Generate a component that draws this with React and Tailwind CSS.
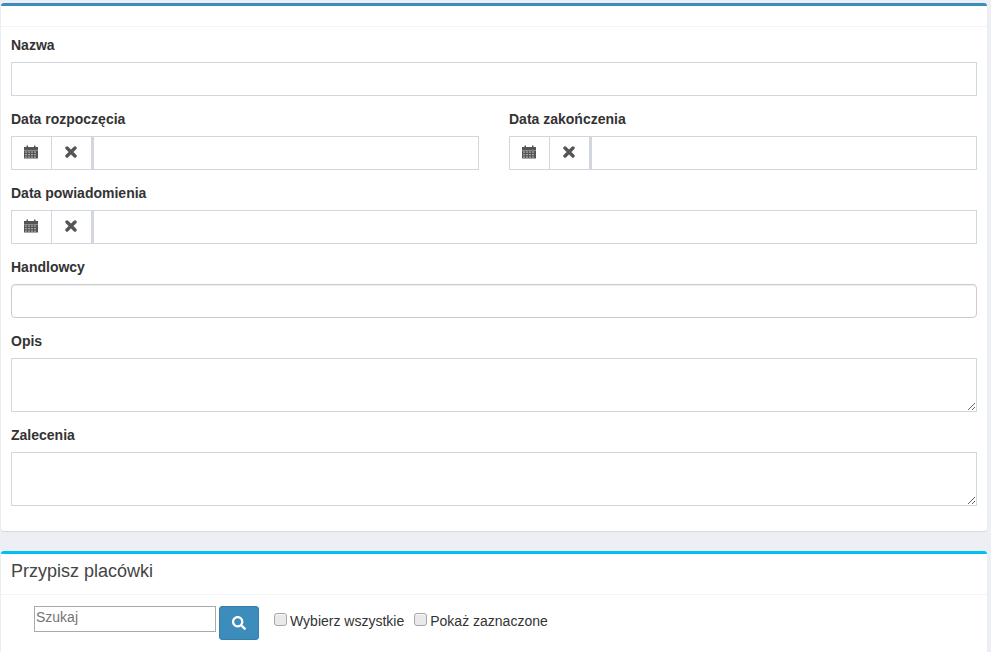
import React from 'react';
import { FaSearch } from 'react-icons/fa';

const inputClass = 'block w-full h-[34px] border border-[#d2d6de] bg-white px-3 text-sm text-[#555] outline-none';
const textareaClass = 'block w-full h-[54px] border border-[#d2d6de] bg-white px-3 py-1.5 text-sm text-[#555] outline-none';
const checkboxClass = 'appearance-none w-[13px] h-[13px] mr-[3px] mb-[3px] rounded-[3px] border border-[#a6a6a6] bg-[#e9e9e9] shadow-[inset_0_1px_1px_rgba(255,255,255,0.8)]';

const calendarCols = [1, 4, 7, 10];
const calendarRows = [6.5, 9, 11.5];

function Label({ children }) {
  return <label className="block h-5 mb-[5px] text-sm leading-4 font-bold text-[#333]">{children}</label>;
}

function CalendarIcon() {
  return (
    <svg width="14" height="14" viewBox="0 0 14 14" className="block">
      <path fill="#555" d="M0 2h2.500V.500h1.500V2h6V.500h1.500V2H14v11.500H0z" />
      <rect x="0" y="5" width="14" height="1" fill="#8a8a8a" />
      {calendarRows.map(y =>
        calendarCols.map(x => (
          <rect key={`${x}-${y}`} x={x} y={y} width="2" height="1.200" fill="#a8a8a8" />
        ))
      )}
    </svg>
  );
}

function RemoveIcon() {
  return (
    <svg width="12" height="12" viewBox="0 0 12 12" className="block">
      <path d="M2 2l8 8M10 2l-8 8" stroke="#555" strokeWidth="3.400" strokeLinecap="round" fill="none" />
    </svg>
  );
}

function DateField({ label }) {
  return (
    <div className="mb-[15px]">
      <Label>{label}</Label>
      <div className="flex h-[34px]">
        <span className="w-[41px] shrink-0 flex items-center justify-center border border-[#d2d6de] bg-white pr-px pb-[2px]">
          <CalendarIcon />
        </span>
        <span className="w-[40px] shrink-0 flex items-center justify-center border-y border-r border-[#d2d6de] bg-white pr-px pb-[2px]">
          <RemoveIcon />
        </span>
        <input type="text" className="min-w-0 flex-1 h-[34px] border border-l-2 border-[#d2d6de] bg-white px-3 text-sm outline-none" />
      </div>
    </div>
  );
}

export default function App() {
  return (
    <div className="h-[652px] overflow-hidden bg-[#ecf0f5] pt-[3px] pl-px pr-[4px] font-['Liberation_Sans',Arial,sans-serif]">
      {/* Dane formularza */}
      <section className="rounded-[3px] border-t-[3px] border-[#3c8dbc] bg-white shadow-[0_1px_1px_rgba(0,0,0,0.1)]">
        <div className="h-[21px] border-b border-[#f4f4f4]"></div>
        <div className="px-[10px] pt-[10px] pb-[10px]">
          <div className="mb-[15px]">
            <Label>Nazwa</Label>
            <input type="text" className={inputClass} />
          </div>

          <div className="grid grid-cols-2 gap-x-[30px]">
            <DateField label="Data rozpoczęcia" />
            <DateField label="Data zakończenia" />
          </div>

          <DateField label="Data powiadomienia" />

          <div className="mb-[15px]">
            <Label>Handlowcy</Label>
            <div className="h-[34px] rounded border border-[#ccc] bg-white shadow-[inset_0_1px_1px_rgba(0,0,0,0.075)]"></div>
          </div>

          <div className="mb-[15px]">
            <Label>Opis</Label>
            <textarea className={textareaClass}></textarea>
          </div>

          <div className="mb-[15px]">
            <Label>Zalecenia</Label>
            <textarea className={textareaClass}></textarea>
          </div>
        </div>
      </section>

      {/* Przypisz placowki */}
      <section className="mt-5 rounded-[3px] border-t-[3px] border-[#00c0ef] bg-white shadow-[0_1px_1px_rgba(0,0,0,0.1)]">
        <div className="h-[41px] border-b border-[#f4f4f4] px-[10px] pt-[7px]">
          <h3 className="text-lg leading-5 text-[#444]">Przypisz placówki</h3>
        </div>
        <div className="flex items-start pl-[33px] pt-[11px] pb-5">
          <input
            type="text"
            placeholder="Szukaj"
            className="w-[182px] h-[26px] border border-[#a9a9a9] bg-white px-px pb-[5px] text-sm text-black outline-none placeholder:text-[#757575]"
          />
          <button className="ml-[3px] w-10 h-[34px] flex items-center justify-center rounded-[3px] border border-[#367fa9] bg-[#3c8dbc] text-white">
            <FaSearch size={14} />
          </button>
          <label className="ml-[15px] flex items-center h-[30px] text-sm text-[#333]">
            <input type="checkbox" className={checkboxClass} />
            Wybierz wszystkie
          </label>
          <label className="ml-[10px] flex items-center h-[30px] text-sm text-[#333]">
            <input type="checkbox" className={checkboxClass} />
            Pokaż zaznaczone
          </label>
        </div>
      </section>
    </div>
  );
}
